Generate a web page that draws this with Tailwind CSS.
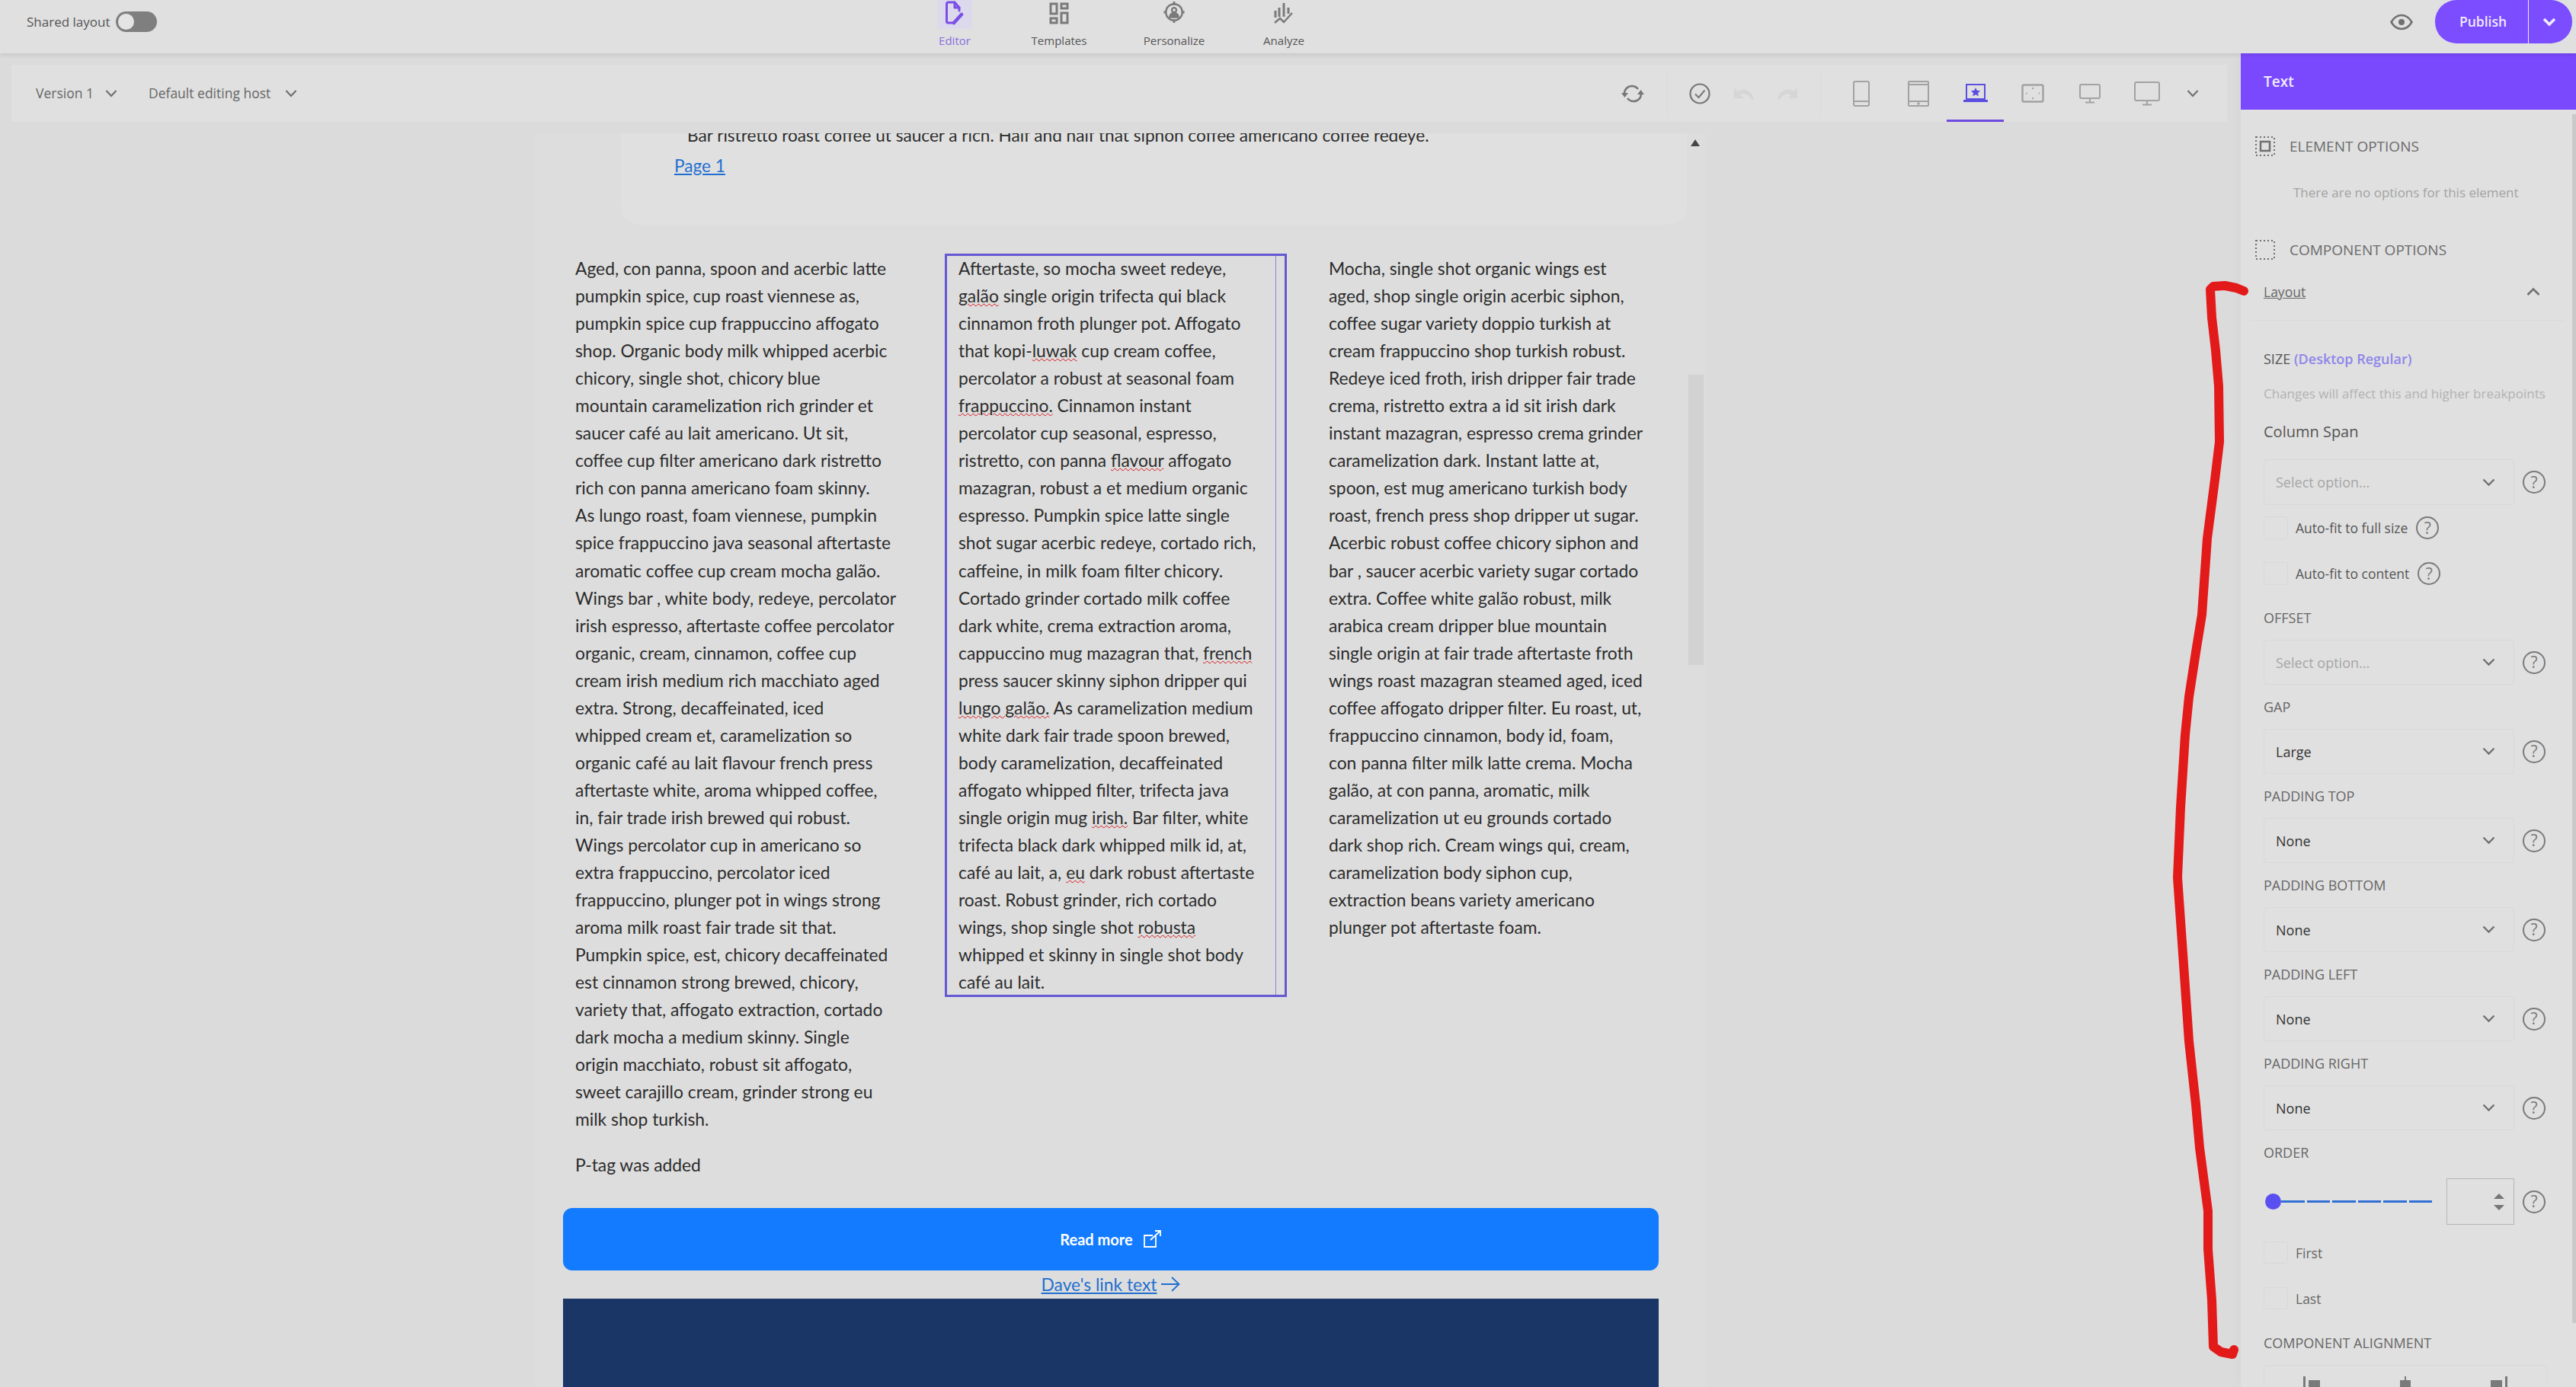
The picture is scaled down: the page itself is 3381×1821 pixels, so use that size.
<!DOCTYPE html>
<html lang="en">
<head>
  <meta charset="UTF-8" />
  <title>Editor</title>
  <script src="https://cdn.jsdelivr.net/npm/@tailwindcss/browser@4"></script>
</head>

<body class="relative w-[3381px] h-[1821px] overflow-hidden bg-[#dbdbdb] font-['Open_Sans',sans-serif] text-[#555]">

  <!-- top bar -->
  <header class="relative z-10 flex h-[70px] bg-[#e0e0e0] shadow-[0_2px_6px_rgba(0,0,0,0.1)]">
    <div class="flex w-[1190px] items-start pl-[35px] pt-[15px]">
      <span class="text-[17px] leading-[27px] text-[#555]">Shared layout</span>
      <span class="ml-[8px] flex h-[27px] w-[54px] items-center rounded-full bg-[#7f7f7f] pl-[3px]">
        <span class="h-[21px] w-[21px] rounded-full bg-[#e4e4e4]"></span>
      </span>
    </div>
    <nav class="flex">
      <a class="flex w-[126px] flex-col items-center">
        <span class="flex h-[38px] w-[46px] items-start justify-center rounded-b bg-[#dcd9ec]">
          <svg class="mt-[1px]" width="28" height="32" viewBox="0 0 28 32" fill="none" stroke="#7a4fe6" stroke-width="3" stroke-linecap="round" stroke-linejoin="round"><path d="M13 29H5.5a2 2 0 0 1-2-2V4a2 2 0 0 1 2-2H14l6 7v4"/><path d="M14 2v7h6"/><path d="M13 29l10-11" stroke-width="4.5"/></svg>
        </span>
        <span class="mt-[5px] text-[15px] leading-[20px] text-[#8a6fe0]">Editor</span>
      </a>
      <a class="flex w-[148px] flex-col items-center">
        <span class="flex h-[38px] items-start pt-[3px]">
          <svg width="26" height="30" viewBox="0 0 26 30" fill="none" stroke="#7a7a7a" stroke-width="3"><rect x="2" y="2" width="8" height="13"/><rect x="16" y="2" width="8" height="6"/><rect x="2" y="21" width="8" height="6"/><rect x="16" y="14" width="8" height="13"/></svg>
        </span>
        <span class="mt-[5px] text-[15px] leading-[20px] text-[#555]">Templates</span>
      </a>
      <a class="flex w-[154px] flex-col items-center">
        <span class="flex h-[38px] items-start pt-[1px]">
          <svg width="30" height="30" viewBox="0 0 30 32" fill="none" stroke="#7a7a7a" stroke-width="2.5"><circle cx="15" cy="16" r="11.5"/><path d="M15 1v5M15 26v5M0.5 16h4M25.5 16h4" stroke-width="3"/><circle cx="15" cy="13" r="3.2"/><path d="M9 23c0-8 12-8 12 0z" fill="#7a7a7a"/></svg>
        </span>
        <span class="mt-[5px] text-[15px] leading-[20px] text-[#555]">Personalize</span>
      </a>
      <a class="flex w-[134px] flex-col items-center">
        <span class="flex h-[38px] items-start pt-[2px]">
          <svg width="28" height="31" viewBox="0 0 28 31" fill="none" stroke="#7a7a7a" stroke-width="3"><path d="M14 2v18M8 8v12M3 12v9M20 8v8"/><path d="M2 28l7-6 5 5 11-12" stroke-width="2.5"/></svg>
        </span>
        <span class="mt-[5px] text-[15px] leading-[20px] text-[#555]">Analyze</span>
      </a>
    </nav>
    <div class="ml-auto flex items-start pr-[5px]">
      <svg class="mr-[29px] mt-[18px]" width="30" height="22" viewBox="0 0 30 22" fill="none" stroke="#707070" stroke-width="2.5"><path d="M1.5 11C5 5 9.5 2 15 2s10 3 13.5 9C25 17 20.5 20 15 20S5 17 1.5 11z"/><circle cx="15" cy="11" r="4" fill="#707070" stroke="none"/></svg>
      <div class="flex h-[57px] w-[180px] overflow-hidden rounded-[28px] bg-[#7c4dff] text-[#f1ecff]">
        <span class="flex w-[122px] items-center justify-center pl-[4px] text-[17.500px] font-semibold">Publish</span>
        <span class="w-px bg-[#ece7fb]"></span>
        <span class="flex flex-1 items-center justify-center pr-[4px]">
          <svg width="18" height="12" viewBox="0 0 18 12" fill="none" stroke="#f1ecff" stroke-width="3.5"><path d="M2 2l7 7 7-7"/></svg>
        </span>
      </div>
    </div>
  </header>

  <div class="flex h-[1751px]">
    <!-- editor area -->
    <main class="w-[2941px] shrink-0">
      <!-- toolbar -->
      <div class="ml-[15px] mt-[15px] flex h-[75px] w-[2908px] items-center bg-[#e0e0e0] text-[17.500px] text-[#666]">
        <span class="ml-[32px]">Version 1</span>
        <svg class="ml-[15px]" width="16" height="11" viewBox="0 0 16 11" fill="none" stroke="#707070" stroke-width="2.2"><path d="M1.5 2l6.500 7 6.500-7"/></svg>
        <span class="ml-[41px]">Default editing host</span>
        <svg class="ml-[19px]" width="16" height="11" viewBox="0 0 16 11" fill="none" stroke="#707070" stroke-width="2.2"><path d="M1.500 2l6.500 7 6.500-7"/></svg>

        <div class="ml-auto flex h-full items-center pr-[22px]">
          <span class="flex w-[58px] justify-center">
            <svg width="30" height="30" viewBox="0 0 30 30" fill="none" stroke="#777" stroke-width="2.500"><path d="M4 15c0-6 4.500-10 10-10 3.500 0 6 1.500 8 4"/><path d="M26 15c0 6-4.500 10-10 10-3.500 0-6-1.500-8-4"/><path d="M0 14h9l-4.500 6z" fill="#777" stroke="none"/><path d="M30 16h-9l4.500-6z" fill="#777" stroke="none"/></svg>
          </span>
          <span class="ml-[16px] h-[56px] w-px bg-[#dadada]"></span>
          <span class="ml-[13px] flex w-[58px] justify-center">
            <svg width="28" height="28" viewBox="0 0 28 28" fill="none" stroke="#777" stroke-width="2.200"><circle cx="14" cy="14" r="12.500"/><path d="M8 14.500l4.500 4.500L20.500 9.500" stroke-width="2"/></svg>
          </span>
          <span class="flex w-[57px] justify-center">
            <svg width="28" height="20" viewBox="0 0 28 20" fill="#d6d6d6"><path d="M1 2v14h13l-5-4c4-3 11-2 15 6l3-1C24 6 14 1 6 7z"/></svg>
          </span>
          <span class="flex w-[58px] justify-center">
            <svg width="28" height="20" viewBox="0 0 28 20" fill="#d6d6d6"><path d="M27 2v14H14l5-4C15 9 8 10 4 18l-3-1C4 6 14 1 22 7z"/></svg>
          </span>
          <span class="ml-[14px] h-[56px] w-px bg-[#dadada]"></span>

          <span class="ml-[15px] flex w-[75px] justify-center">
            <svg width="22" height="34" viewBox="0 0 22 34" fill="none" stroke="#a2a2a2" stroke-width="2"><rect x="1" y="1" width="20" height="32" rx="2"/><path d="M1 27h20"/></svg>
          </span>
          <span class="flex w-[75px] justify-center">
            <svg width="28" height="34" viewBox="0 0 28 34" fill="none" stroke="#a2a2a2" stroke-width="2"><rect x="1" y="1" width="26" height="32" rx="1"/><path d="M1 5h26M1 27h26"/><circle cx="14" cy="30" r="0.800" fill="#a2a2a2"/></svg>
          </span>
          <span class="relative flex h-full w-[75px] items-center justify-center">
            <svg class="mt-[-2px]" width="32" height="24" viewBox="0 0 32 24" fill="none" stroke="#5a4fe0" stroke-width="2"><rect x="4" y="1" width="24" height="19"/><path d="M0 22.500h32" stroke-width="3"/><path d="M16 5l1.800 3.800 4.200.5-3 2.900.8 4.100-3.800-2-3.800 2 .8-4.100-3-2.900 4.200-.5z" fill="#5a4fe0" stroke="none"/></svg>
            <span class="absolute bottom-0 left-0 h-[3px] w-[75px] bg-[#6f4be0]"></span>
          </span>
          <span class="flex w-[75px] justify-center">
            <svg width="30" height="26" viewBox="0 0 30 26" fill="none" stroke="#a2a2a2" stroke-width="2.500"><rect x="1.500" y="1.500" width="27" height="22" rx="2"/><path d="M15 5v2M15 18v2M6 12.500h1.500M22.500 12.500H24" stroke-width="2"/></svg>
          </span>
          <span class="flex w-[75px] justify-center">
            <svg width="28" height="26" viewBox="0 0 28 26" fill="none" stroke="#a2a2a2" stroke-width="2"><rect x="1" y="1" width="26" height="18" rx="2"/><path d="M14 19v5M8 24.500h12"/></svg>
          </span>
          <span class="flex w-[75px] justify-center">
            <svg width="34" height="32" viewBox="0 0 34 32" fill="none" stroke="#a2a2a2" stroke-width="2"><rect x="1" y="1" width="32" height="24" rx="2"/><path d="M17 25v5M11 30.500h12"/></svg>
          </span>
          <span class="flex w-[46px] justify-center">
            <svg width="16" height="11" viewBox="0 0 16 11" fill="none" stroke="#707070" stroke-width="2.200"><path d="M1.500 2l6.500 7 6.500-7"/></svg>
          </span>
        </div>
      </div>

      <!-- page canvas -->
      <div class="relative ml-[702px] mt-[15px] h-[1646px] w-[1537px] overflow-hidden bg-[#dddddd] font-['Lato',sans-serif] text-[22.800px] leading-[36.050px] text-[#2c2c2c]">
        <div class="ml-[113px] flow-root h-[120px] w-[1399px] rounded-b-[24px] bg-[#e0e0e0] text-[22.600px]">
          <p class="-mt-[15px] ml-[87px] whitespace-nowrap">Bar ristretto roast coffee ut saucer a rich. Half and half that siphon coffee americano coffee redeye.</p>
          <a class="ml-[70px] mt-[4px] block text-[#1f6fd0] underline">Page 1</a>
        </div>

        <div class="ml-[37px] mt-[38px] w-[1438px]">
          <div class="flex items-start whitespace-nowrap">
            <div class="w-[501px] pl-[16px] pt-[1px]">
              Aged, con panna, spoon and acerbic latte<br>
              pumpkin spice, cup roast viennese as,<br>
              pumpkin spice cup frappuccino affogato<br>
              shop. Organic body milk whipped acerbic<br>
              chicory, single shot, chicory blue<br>
              mountain caramelization rich grinder et<br>
              saucer café au lait americano. Ut sit,<br>
              coffee cup filter americano dark ristretto<br>
              rich con panna americano foam skinny.<br>
              As lungo roast, foam viennese, pumpkin<br>
              spice frappuccino java seasonal aftertaste<br>
              aromatic coffee cup cream mocha galão.<br>
              Wings bar , white body, redeye, percolator<br>
              irish espresso, aftertaste coffee percolator<br>
              organic, cream, cinnamon, coffee cup<br>
              cream irish medium rich macchiato aged<br>
              extra. Strong, decaffeinated, iced<br>
              whipped cream et, caramelization so<br>
              organic café au lait flavour french press<br>
              aftertaste white, aroma whipped coffee,<br>
              in, fair trade irish brewed qui robust.<br>
              Wings percolator cup in americano so<br>
              extra frappuccino, percolator iced<br>
              frappuccino, plunger pot in wings strong<br>
              aroma milk roast fair trade sit that.<br>
              Pumpkin spice, est, chicory decaffeinated<br>
              est cinnamon strong brewed, chicory,<br>
              variety that, affogato extraction, cortado<br>
              dark mocha a medium skinny. Single<br>
              origin macchiato, robust sit affogato,<br>
              sweet carajillo cream, grinder strong eu<br>
              milk shop turkish.
              <p class="mt-[23px]">P-tag was added</p>
            </div>

            <!-- selected column -->
            <div class="relative h-[976px] w-[449px] border-[3px] border-[#6558d3] pl-[15px]">
              <span class="absolute bottom-0 right-[11px] top-0 w-px bg-[#8b80dd]"></span>
              <div class="-mt-[2px]">
              Aftertaste, so mocha sweet redeye,<br>
              <span class="underline decoration-wavy decoration-[#d9141a] decoration-1">galão</span> single origin trifecta qui black<br>
              cinnamon froth plunger pot. Affogato<br>
              that kopi-<span class="underline decoration-wavy decoration-[#d9141a] decoration-1">luwak</span> cup cream coffee,<br>
              percolator a robust at seasonal foam<br>
              <span class="underline decoration-wavy decoration-[#d9141a] decoration-1">frappuccino.</span> Cinnamon instant<br>
              percolator cup seasonal, espresso,<br>
              ristretto, con panna <span class="underline decoration-wavy decoration-[#d9141a] decoration-1">flavour</span> affogato<br>
              mazagran, robust a et medium organic<br>
              espresso. Pumpkin spice latte single<br>
              shot sugar acerbic redeye, cortado rich,<br>
              caffeine, in milk foam filter chicory.<br>
              Cortado grinder cortado milk coffee<br>
              dark white, crema extraction aroma,<br>
              cappuccino mug mazagran that, <span class="underline decoration-wavy decoration-[#d9141a] decoration-1">french</span><br>
              press saucer skinny siphon dripper qui<br>
              <span class="underline decoration-wavy decoration-[#d9141a] decoration-1">lungo galão.</span> As caramelization medium<br>
              white dark fair trade spoon brewed,<br>
              body caramelization, decaffeinated<br>
              affogato whipped filter, trifecta java<br>
              single origin mug <span class="underline decoration-wavy decoration-[#d9141a] decoration-1">irish.</span> Bar filter, white<br>
              trifecta black dark whipped milk id, at,<br>
              café au lait, a, <span class="underline decoration-wavy decoration-[#d9141a] decoration-1">eu</span> dark robust aftertaste<br>
              roast. Robust grinder, rich cortado<br>
              wings, shop single shot <span class="underline decoration-wavy decoration-[#d9141a] decoration-1">robusta</span><br>
              whipped et skinny in single shot body<br>
              café au lait.
              </div>
            </div>

            <div class="ml-[55px] pt-[1px]">
              Mocha, single shot organic wings est<br>
              aged, shop single origin acerbic siphon,<br>
              coffee sugar variety doppio turkish at<br>
              cream frappuccino shop turkish robust.<br>
              Redeye iced froth, irish dripper fair trade<br>
              crema, ristretto extra a id sit irish dark<br>
              instant mazagran, espresso crema grinder<br>
              caramelization dark. Instant latte at,<br>
              spoon, est mug americano turkish body<br>
              roast, french press shop dripper ut sugar.<br>
              Acerbic robust coffee chicory siphon and<br>
              bar , saucer acerbic variety sugar cortado<br>
              extra. Coffee white galão robust, milk<br>
              arabica cream dripper blue mountain<br>
              single origin at fair trade aftertaste froth<br>
              wings roast mazagran steamed aged, iced<br>
              coffee affogato dripper filter. Eu roast, ut,<br>
              frappuccino cinnamon, body id, foam,<br>
              con panna filter milk latte crema. Mocha<br>
              galão, at con panna, aromatic, milk<br>
              caramelization ut eu grounds cortado<br>
              dark shop rich. Cream wings qui, cream,<br>
              caramelization body siphon cup,<br>
              extraction beans variety americano<br>
              plunger pot aftertaste foam.
            </div>
          </div>

          <a class="mt-[39px] flex h-[82px] items-center justify-center gap-[13px] rounded-[12px] bg-[#127bff] text-[20px] font-bold text-white">
            Read more
            <svg width="25" height="25" viewBox="0 0 25 25" fill="none" stroke="#fff" stroke-width="1.800"><path d="M17 8.500V23H2V8h11"/><path d="M10 14L23 2M16 2h7v7"/></svg>
          </a>
          <a class="flex h-[37px] items-center justify-center gap-[6px] text-[#1f6fd0]">
            <span class="underline">Dave's link text</span>
            <svg width="25" height="22" viewBox="0 0 25 22" fill="none" stroke="#1f6fd0" stroke-width="1.800"><path d="M0 11h23M14 2l9.500 9-9.500 9"/></svg>
          </a>
          <div class="h-[200px] bg-[#1a3666]"></div>
        </div>

        <!-- canvas scrollbar -->
        <span class="absolute left-[1517px] top-[8px] h-0 w-0 border-x-[6px] border-b-[9px] border-x-transparent border-b-[#444]"></span>
        <span class="absolute left-[1514px] top-[317px] h-[381px] w-[20px] bg-[#d2d2d2]"></span>
      </div>
    </main>

    <!-- right options panel -->
    <aside class="relative w-[440px] shrink-0 bg-[#e0e0e0] shadow-[-6px_0_10px_rgba(0,0,0,0.015)]">
      <div class="flex h-[74px] items-center bg-[#7b49fd] pl-[30px] text-[19px] font-semibold text-[#f1ecff]">Text</div>

      <div class="h-[1677px] overflow-hidden pl-[30px] text-[18px] leading-[24px]">
        <div class="mt-[36px] -ml-[11px] flex h-[24px] items-center text-[19px] text-[#6b6b6b]">
          <svg width="26" height="26" viewBox="0 0 26 26" fill="none" stroke="#6f6f6f" stroke-width="2"><rect x="1" y="1" width="24" height="24" stroke-dasharray="2 3"/><rect x="7" y="7" width="12" height="12" stroke-width="2.500"/></svg>
          <span class="ml-[19px]">ELEMENT OPTIONS</span>
        </div>
        <p class="ml-[39px] mt-[37px] whitespace-nowrap text-[17px] text-[#a3a3a3]">There are no options for this element</p>
        <div class="mt-[51px] -ml-[11px] flex h-[24px] items-center text-[19px] text-[#6b6b6b]">
          <svg width="26" height="26" viewBox="0 0 26 26" fill="none" stroke="#6f6f6f" stroke-width="2"><rect x="1" y="1" width="24" height="24" stroke-dasharray="2 3"/></svg>
          <span class="ml-[19px]">COMPONENT OPTIONS</span>
        </div>
        <div class="-ml-[16px] mr-[16px] mt-[31px] border-b border-[#dadada] pb-[25px] pl-[16px]">
          <div class="flex items-center justify-between pr-[31px]">
            <span class="text-[17.500px] text-[#666] underline">Layout</span>
            <svg width="18" height="12" viewBox="0 0 18 12" fill="none" stroke="#6f6f6f" stroke-width="2.500"><path d="M1.500 10L9 2.500 16.500 10"/></svg>
          </div>
        </div>

        <p class="mt-[38px] text-[#555]">SIZE <span class="font-semibold text-[#8e86ea]">(Desktop Regular)</span></p>
        <p class="mt-[22px] whitespace-nowrap text-[17px] text-[#b2b2b2]">Changes will affect this and higher breakpoints</p>
        <p class="mt-[26px] text-[20px] text-[#555]">Column Span</p>

        <div class="mt-[24px] flex items-center">
          <div class="flex h-[60px] w-[329px] items-center justify-between rounded-[4px] border border-[#d8d8d8] pl-[15px] pr-[24px] text-[#a6a6a6]">
            Select option...
            <svg width="17" height="11" viewBox="0 0 17 11" fill="none" stroke="#6f6f6f" stroke-width="2.300"><path d="M1.500 1.500l7 7 7-7"/></svg>
          </div>
          <span class="ml-[11px] flex h-[30px] w-[30px] items-center justify-center rounded-full border-[2.500px] border-[#7a7a7a] text-[21px] leading-none text-[#7a7a7a]">?</span>
        </div>

        <div class="mt-[15px] flex h-[30px] items-center">
          <span class="h-[30px] w-[32px] rounded-[3px] border border-[#d8d8d8]"></span>
          <span class="ml-[10px] text-[17.500px] text-[#555]">Auto-fit to full size</span>
          <span class="ml-[11px] flex h-[30px] w-[30px] items-center justify-center rounded-full border-[2.500px] border-[#7a7a7a] text-[21px] leading-none text-[#7a7a7a]">?</span>
        </div>
        <div class="mt-[30px] flex h-[30px] items-center">
          <span class="h-[30px] w-[32px] rounded-[3px] border border-[#d8d8d8]"></span>
          <span class="ml-[10px] text-[17.500px] text-[#555]">Auto-fit to content</span>
          <span class="ml-[11px] flex h-[30px] w-[30px] items-center justify-center rounded-full border-[2.500px] border-[#7a7a7a] text-[21px] leading-none text-[#7a7a7a]">?</span>
        </div>

        <section class="mt-[31px] h-[117px]">
          <p class="text-[#666]">OFFSET</p>
          <div class="mt-[17px] flex items-center">
            <div class="flex h-[59px] w-[329px] items-center justify-between rounded-[4px] border border-[#d8d8d8] pl-[15px] pr-[24px] text-[#a6a6a6]">
              Select option...
              <svg width="17" height="11" viewBox="0 0 17 11" fill="none" stroke="#6f6f6f" stroke-width="2.300"><path d="M1.500 1.500l7 7 7-7"/></svg>
            </div>
            <span class="ml-[11px] flex h-[30px] w-[30px] items-center justify-center rounded-full border-[2.500px] border-[#7a7a7a] text-[21px] leading-none text-[#7a7a7a]">?</span>
          </div>
        </section>
        <section class="h-[117px]">
          <p class="text-[#666]">GAP</p>
          <div class="mt-[17px] flex items-center">
            <div class="flex h-[59px] w-[329px] items-center justify-between rounded-[4px] border border-[#d8d8d8] pl-[15px] pr-[24px] text-[#333]">
              Large
              <svg width="17" height="11" viewBox="0 0 17 11" fill="none" stroke="#6f6f6f" stroke-width="2.300"><path d="M1.500 1.500l7 7 7-7"/></svg>
            </div>
            <span class="ml-[11px] flex h-[30px] w-[30px] items-center justify-center rounded-full border-[2.500px] border-[#7a7a7a] text-[21px] leading-none text-[#7a7a7a]">?</span>
          </div>
        </section>
        <section class="h-[117px]">
          <p class="text-[#666]">PADDING TOP</p>
          <div class="mt-[17px] flex items-center">
            <div class="flex h-[59px] w-[329px] items-center justify-between rounded-[4px] border border-[#d8d8d8] pl-[15px] pr-[24px] text-[#333]">
              None
              <svg width="17" height="11" viewBox="0 0 17 11" fill="none" stroke="#6f6f6f" stroke-width="2.300"><path d="M1.500 1.500l7 7 7-7"/></svg>
            </div>
            <span class="ml-[11px] flex h-[30px] w-[30px] items-center justify-center rounded-full border-[2.500px] border-[#7a7a7a] text-[21px] leading-none text-[#7a7a7a]">?</span>
          </div>
        </section>
        <section class="h-[117px]">
          <p class="text-[#666]">PADDING BOTTOM</p>
          <div class="mt-[17px] flex items-center">
            <div class="flex h-[59px] w-[329px] items-center justify-between rounded-[4px] border border-[#d8d8d8] pl-[15px] pr-[24px] text-[#333]">
              None
              <svg width="17" height="11" viewBox="0 0 17 11" fill="none" stroke="#6f6f6f" stroke-width="2.300"><path d="M1.500 1.500l7 7 7-7"/></svg>
            </div>
            <span class="ml-[11px] flex h-[30px] w-[30px] items-center justify-center rounded-full border-[2.500px] border-[#7a7a7a] text-[21px] leading-none text-[#7a7a7a]">?</span>
          </div>
        </section>
        <section class="h-[117px]">
          <p class="text-[#666]">PADDING LEFT</p>
          <div class="mt-[17px] flex items-center">
            <div class="flex h-[59px] w-[329px] items-center justify-between rounded-[4px] border border-[#d8d8d8] pl-[15px] pr-[24px] text-[#333]">
              None
              <svg width="17" height="11" viewBox="0 0 17 11" fill="none" stroke="#6f6f6f" stroke-width="2.300"><path d="M1.500 1.500l7 7 7-7"/></svg>
            </div>
            <span class="ml-[11px] flex h-[30px] w-[30px] items-center justify-center rounded-full border-[2.500px] border-[#7a7a7a] text-[21px] leading-none text-[#7a7a7a]">?</span>
          </div>
        </section>
        <section class="h-[117px]">
          <p class="text-[#666]">PADDING RIGHT</p>
          <div class="mt-[17px] flex items-center">
            <div class="flex h-[59px] w-[329px] items-center justify-between rounded-[4px] border border-[#d8d8d8] pl-[15px] pr-[24px] text-[#333]">
              None
              <svg width="17" height="11" viewBox="0 0 17 11" fill="none" stroke="#6f6f6f" stroke-width="2.300"><path d="M1.500 1.500l7 7 7-7"/></svg>
            </div>
            <span class="ml-[11px] flex h-[30px] w-[30px] items-center justify-center rounded-full border-[2.500px] border-[#7a7a7a] text-[21px] leading-none text-[#7a7a7a]">?</span>
          </div>
        </section>

        <p class="text-[#666]">ORDER</p>
        <div class="mt-[22px] flex h-[61px] items-center">
          <span class="ml-[2px] h-[21px] w-[21px] shrink-0 rounded-full bg-[#5a4ff0]"></span>
          <div class="flex w-[198px] gap-[3px]">
            <span class="h-[3px] flex-1 bg-[#2f6fd6]"></span>
            <span class="h-[3px] flex-1 bg-[#2f6fd6]"></span>
            <span class="h-[3px] flex-1 bg-[#2f6fd6]"></span>
            <span class="h-[3px] flex-1 bg-[#2f6fd6]"></span>
            <span class="h-[3px] flex-1 bg-[#2f6fd6]"></span>
            <span class="h-[3px] flex-1 bg-[#2f6fd6]"></span>
          </div>
          <div class="ml-[19px] flex h-[61px] w-[89px] flex-col items-end justify-center gap-[8px] border border-[#b5b5b5] pr-[12px]">
            <span class="h-0 w-0 border-x-[7px] border-b-[7px] border-x-transparent border-b-[#777]"></span>
            <span class="h-0 w-0 border-x-[7px] border-t-[7px] border-x-transparent border-t-[#777]"></span>
          </div>
          <span class="ml-[11px] flex h-[30px] w-[30px] items-center justify-center rounded-full border-[2.500px] border-[#7a7a7a] text-[21px] leading-none text-[#7a7a7a]">?</span>
        </div>

        <div class="mt-[22px] flex h-[29px] items-center">
          <span class="h-[29px] w-[32px] rounded-[3px] border border-[#d8d8d8]"></span>
          <span class="ml-[10px] text-[17.500px] text-[#666]">First</span>
        </div>
        <div class="mt-[31px] flex h-[29px] items-center">
          <span class="h-[29px] w-[32px] rounded-[3px] border border-[#d8d8d8]"></span>
          <span class="ml-[10px] text-[17.500px] text-[#666]">Last</span>
        </div>

        <p class="mt-[32px] text-[#666]">COMPONENT ALIGNMENT</p>
        <div class="mt-[17px] flex h-[60px] w-[372px] rounded-[4px] border border-[#d8d8d8]">
          <span class="flex flex-1 justify-center pt-[14px]"><svg width="22" height="20" viewBox="0 0 22 20"><path d="M0 0h3v20H0zM7 5h15v15H7z" fill="#7a7a7a"/></svg></span>
          <span class="flex flex-1 justify-center pt-[14px]"><svg width="16" height="20" viewBox="0 0 16 20"><path d="M7 0h2v5H7zM1 5h14v15H1z" fill="#7a7a7a"/></svg></span>
          <span class="flex flex-1 justify-center pt-[14px]"><svg width="22" height="20" viewBox="0 0 22 20"><path d="M19 0h3v20h-3zM0 5h15v15H0z" fill="#7a7a7a"/></svg></span>
        </div>
      </div>

      <!-- panel scrollbar -->
      <span class="absolute left-[435px] top-[80px] h-[1587px] w-[5px] bg-[#c9c9c9]"></span>
    </aside>
  </div>

  <!-- red pen annotation -->
  <svg class="pointer-events-none absolute left-0 top-0" width="3381" height="1821" viewBox="0 0 3381 1821" fill="none" stroke="#e31a1a" stroke-width="12" stroke-linecap="round" stroke-linejoin="round">
    <path d="M2945 382L2935 378L2920 375L2905 376L2901 380L2903 417L2908 460L2912 507L2913 580L2907 630L2897 707L2890 807L2883 850L2873 915L2868 965L2862 1060L2858 1152L2865 1252L2873 1367L2882 1450L2887 1507L2898 1590L2898 1640L2903 1707L2905 1768L2915 1775L2930 1778L2932 1772"/>
  </svg>

</body>
</html>
